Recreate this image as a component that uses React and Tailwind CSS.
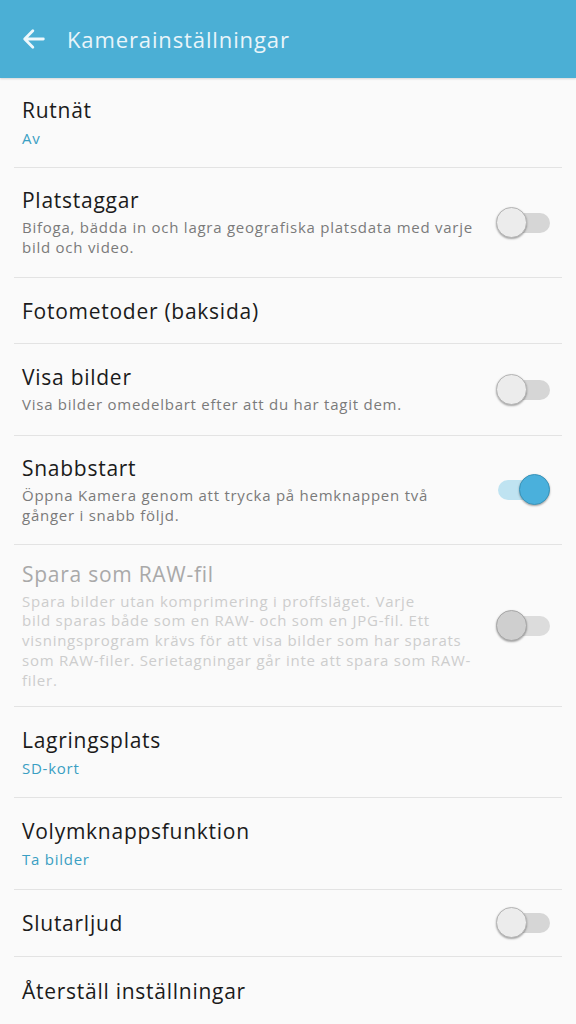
import React from 'react';

const font = { fontFamily: '"Open Sans", Roboto, sans-serif' };

const Toggle = ({ on, disabled }) => (
  <div className="relative h-[32px] w-[54px] shrink-0">
    <div
      className={`absolute left-[2px] right-0 top-[6px] h-[20px] rounded-full ${
        on ? 'bg-[#bfe3f1]' : disabled ? 'bg-[#dcdcdc]' : 'bg-[#d6d6d6]'
      }`}
    />
    <div
      className={`absolute top-0 h-[31px] w-[31px] rounded-full border shadow-[0_1px_2px_rgba(0,0,0,0.35)] ${
        on
          ? 'right-0 border-[#3a95bb] bg-[#4ab0dc]'
          : disabled
          ? 'left-0 border-[#a8a8a8] bg-[#cfcfcf]'
          : 'left-0 border-[#b5b5b5] bg-[#ececec]'
      }`}
    />
  </div>
);

const Row = ({ title, sub, desc, toggle, on, disabled, h, last }) => (
  <div
    className={`flex items-center justify-between pl-[8px] ${h} ${
      last ? '' : 'border-b border-[#e3e3e3]'
    }`}
  >
    <div className="flex-1 pr-[16px]">
      <div
        className={`text-[21px] leading-[26px] tracking-[0.035em] ${
          disabled ? 'text-[#a9a9a9]' : 'text-[#1b1b1b]'
        }`}
      >
        {title}
      </div>
      {sub && (
        <div className="mt-[5px] text-[15px] leading-[20px] tracking-[0.05em] text-[#3a9fc3]">{sub}</div>
      )}
      {desc && (
        <div
          className={`mt-[5px] text-[15px] leading-[19.7px] tracking-[0.05em] ${
            disabled ? 'text-[#cdcdcd]' : 'text-[#7a7a7a]'
          }`}
        >
          {desc}
        </div>
      )}
    </div>
    {toggle && (
      <div className="pr-[12px]">
        <Toggle on={on} disabled={disabled} />
      </div>
    )}
  </div>
);

export default function App() {
  return (
    <div className="h-[1024px] w-[576px] overflow-hidden bg-[#fafafa]" style={font}>
      <header className="flex h-[78px] items-center bg-[#4bafd5] px-[20px] shadow-[0_1px_2px_rgba(0,0,0,0.15)]">
        <svg width="28" height="28" viewBox="0 0 24 24" fill="none" stroke="#eef8fc" strokeWidth="2.4" strokeLinecap="round" strokeLinejoin="round">
          <path d="M20 12H4.5M11 5l-7 7 7 7" />
        </svg>
        <h1 className="ml-[19px] text-[22px] tracking-[0.04em] text-[#e9f5fa]">Kamerainställningar</h1>
      </header>
      <div className="px-[14px]">
        <Row h="h-[90px]" title="Rutnät" sub="Av" />
        <Row
          h="h-[110px]"
          title="Platstaggar"
          desc="Bifoga, bädda in och lagra geografiska platsdata med varje bild och video."
          toggle
        />
        <Row h="h-[66px]" title="Fotometoder (baksida)" />
        <Row h="h-[92px]" title="Visa bilder" desc="Visa bilder omedelbart efter att du har tagit dem." toggle />
        <Row
          h="h-[109px]"
          title="Snabbstart"
          desc="Öppna Kamera genom att trycka på hemknappen två gånger i snabb följd."
          toggle
          on
        />
        <Row
          h="h-[162px]"
          title="Spara som RAW-fil"
          desc={
            <>
              Spara bilder utan komprimering i proffsläget. Varje
              <br />
              bild sparas både som en RAW- och som en JPG-fil. Ett
              <br />
              visningsprogram krävs för att visa bilder som har sparats
              <br />
              som RAW-filer. Serietagningar går inte att spara som RAW-
              <br />
              filer.
            </>
          }
          toggle
          disabled
        />
        <Row h="h-[91px]" title="Lagringsplats" sub="SD-kort" />
        <Row h="h-[92px]" title="Volymknappsfunktion" sub="Ta bilder" />
        <Row h="h-[67px]" title="Slutarljud" toggle />
        <Row h="h-[67px]" title="Återställ inställningar" last />
      </div>
    </div>
  );
}
